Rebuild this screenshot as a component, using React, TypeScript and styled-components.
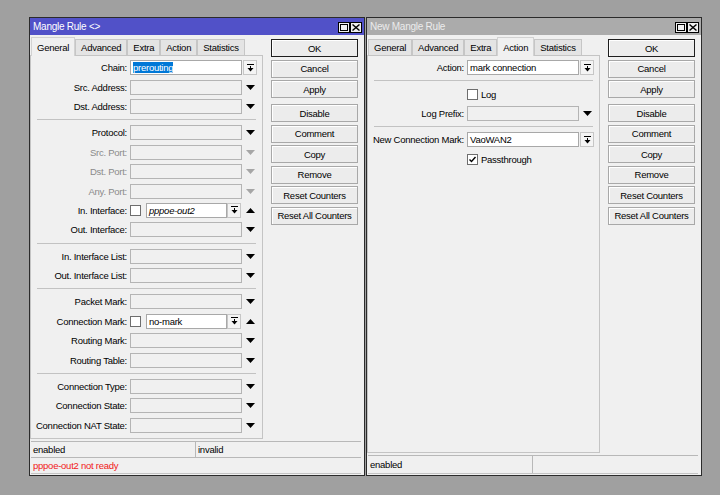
import React from 'react';
import styled, { createGlobalStyle } from 'styled-components';

const GlobalStyle = createGlobalStyle`
  html, body {
    margin: 0;
    padding: 0;
    background: #a0a0a0;
  }
  body {
    font-family: "Liberation Sans", Arial, sans-serif;
    font-size: 9.5px;
    letter-spacing: -0.25px;
    color: #000;
  }
`;

type RowDef =
  | { kind: 'sep' }
  | {
      kind: 'row';
      label: string;
      field: 'combo' | 'drop' | 'check' | 'checkbox';
      value?: string;
      disabled?: boolean;
      italic?: boolean;
      selected?: boolean;
      checked?: boolean;
    };

const leftRows: RowDef[] = [
  { kind: 'row', label: 'Chain:', field: 'drop', value: 'prerouting', selected: true },
  { kind: 'row', label: 'Src. Address:', field: 'combo' },
  { kind: 'row', label: 'Dst. Address:', field: 'combo' },
  { kind: 'sep' },
  { kind: 'row', label: 'Protocol:', field: 'combo' },
  { kind: 'row', label: 'Src. Port:', field: 'combo', disabled: true },
  { kind: 'row', label: 'Dst. Port:', field: 'combo', disabled: true },
  { kind: 'row', label: 'Any. Port:', field: 'combo', disabled: true },
  { kind: 'row', label: 'In. Interface:', field: 'check', value: 'pppoe-out2', italic: true },
  { kind: 'row', label: 'Out. Interface:', field: 'combo' },
  { kind: 'sep' },
  { kind: 'row', label: 'In. Interface List:', field: 'combo' },
  { kind: 'row', label: 'Out. Interface List:', field: 'combo' },
  { kind: 'sep' },
  { kind: 'row', label: 'Packet Mark:', field: 'combo' },
  { kind: 'row', label: 'Connection Mark:', field: 'check', value: 'no-mark' },
  { kind: 'row', label: 'Routing Mark:', field: 'combo' },
  { kind: 'row', label: 'Routing Table:', field: 'combo' },
  { kind: 'sep' },
  { kind: 'row', label: 'Connection Type:', field: 'combo' },
  { kind: 'row', label: 'Connection State:', field: 'combo' },
  { kind: 'row', label: 'Connection NAT State:', field: 'combo' },
];

const rightRows: RowDef[] = [
  { kind: 'row', label: 'Action:', field: 'drop', value: 'mark connection' },
  { kind: 'sep' },
  { kind: 'row', label: '', field: 'checkbox', value: 'Log' },
  { kind: 'row', label: 'Log Prefix:', field: 'combo' },
  { kind: 'sep' },
  { kind: 'row', label: 'New Connection Mark:', field: 'drop', value: 'VaoWAN2' },
  { kind: 'row', label: '', field: 'checkbox', value: 'Passthrough', checked: true },
];

const tabs = ['General', 'Advanced', 'Extra', 'Action', 'Statistics'];
const buttons = ['OK', 'Cancel', 'Apply', 'Disable', 'Comment', 'Copy', 'Remove', 'Reset Counters', 'Reset All Counters'];

function DownArrow({ color = '#000' }: { color?: string }) {
  return (
    <svg width="9" height="5" viewBox="0 0 9 5">
      <polygon points="0,0 9,0 4.5,5" fill={color} />
    </svg>
  );
}

function UpArrow() {
  return (
    <svg width="9" height="5" viewBox="0 0 9 5">
      <polygon points="0,5 9,5 4.5,0" fill="#000" />
    </svg>
  );
}

function BarDownIcon() {
  return (
    <svg width="7" height="8" viewBox="0 0 7 8">
      <rect x="0" y="0" width="7" height="1" fill="#000" />
      <rect x="3" y="2" width="1" height="3" fill="#000" />
      <polygon points="0.5,4 6.5,4 3.5,7.5" fill="#000" />
    </svg>
  );
}

function CheckMark() {
  return (
    <svg width="9" height="9" viewBox="0 0 9 9">
      <polyline points="1.5,4.5 3.5,6.5 7.5,2" fill="none" stroke="#000" strokeWidth="1.4" />
    </svg>
  );
}

function FormRows({ rows }: { rows: RowDef[] }) {
  return (
    <>
      {rows.map((r, i) => {
        if (r.kind === 'sep') return <Separator key={i} />;
        return (
          <Row key={i}>
            <Label $disabled={r.disabled}>{r.label}</Label>
            {r.field === 'combo' && (
              <>
                <Field $w={112} />
                <ArrowCell>
                  <DownArrow color={r.disabled ? '#a6a6a6' : '#000'} />
                </ArrowCell>
              </>
            )}
            {r.field === 'drop' && (
              <>
                <Field $w={112} $white>
                  {r.selected ? <Selection>{r.value}</Selection> : r.value}
                </Field>
                <DropButton $gap={1}>
                  <BarDownIcon />
                </DropButton>
              </>
            )}
            {r.field === 'check' && (
              <>
                <CheckBox />
                <Field $w={81} $white $italic={r.italic} $ml={5}>
                  {r.value}
                </Field>
                <DropButton $gap={0}>
                  <BarDownIcon />
                </DropButton>
                <ArrowCell $w={18}>
                  <UpArrow />
                </ArrowCell>
              </>
            )}
            {r.field === 'checkbox' && (
              <>
                <CheckBox>{r.checked && <CheckMark />}</CheckBox>
                <CheckText>{r.value}</CheckText>
              </>
            )}
          </Row>
        );
      })}
    </>
  );
}

function TitleControls() {
  return (
    <Controls>
      <CtrlBox>
        <MaxSquare />
      </CtrlBox>
      <CtrlBox>
        <svg width="8" height="7" viewBox="0 0 8 7">
          <line x1="0.5" y1="0.5" x2="7.5" y2="6.5" stroke="#000" strokeWidth="1.4" />
          <line x1="7.5" y1="0.5" x2="0.5" y2="6.5" stroke="#000" strokeWidth="1.4" />
        </svg>
      </CtrlBox>
    </Controls>
  );
}

function RuleWindow({
  title,
  active,
  activeTab,
  rows,
  status,
}: {
  title: string;
  active?: boolean;
  activeTab: string;
  rows: RowDef[];
  status: { cells: string[]; message?: string };
}) {
  return (
    <Window>
      <TitleBar $active={active}>
        <TitleText $active={active}>{title}</TitleText>
        <TitleControls />
      </TitleBar>
      <Body>
        <LeftCol>
          <TabStrip>
            {tabs.map((t) => (
              <Tab key={t} $active={t === activeTab}>
                {t}
              </Tab>
            ))}
          </TabStrip>
          <Panel>
            <FormRows rows={rows} />
          </Panel>
        </LeftCol>
        <ButtonCol>
          {buttons.map((b) => (
            <Button key={b} $default={b === 'OK'} $spaced={b === 'Disable'}>
              {b}
            </Button>
          ))}
        </ButtonCol>
      </Body>
      <StatusBar>
        <StatusRow $tall={!status.message}>
          <StatusCell>{status.cells[0]}</StatusCell>
          <StatusCell $last>{status.cells[1]}</StatusCell>
        </StatusRow>
        {status.message && (
          <StatusRow $single>
            <StatusCell $last $error>
              {status.message}
            </StatusCell>
          </StatusRow>
        )}
      </StatusBar>
    </Window>
  );
}

export default function App() {
  return (
    <>
      <GlobalStyle />
      <Desktop>
        <RuleWindow
          title="Mangle Rule <>"
          active
          activeTab="General"
          rows={leftRows}
          status={{ cells: ['enabled', 'invalid'], message: 'pppoe-out2 not ready' }}
        />
        <RuleWindow
          title="New Mangle Rule"
          activeTab="Action"
          rows={rightRows}
          status={{ cells: ['enabled', ''] }}
        />
      </Desktop>
    </>
  );
}

const Desktop = styled.div`
  display: flex;
  gap: 1px;
  padding: 17px 0 0 29px;
  width: 720px;
  height: 495px;
  box-sizing: border-box;
`;

const Window = styled.div`
  width: 336px;
  height: 459px;
  box-sizing: border-box;
  border: 1px solid #2b2b2b;
  background: #f0f0f0;
  display: flex;
  flex-direction: column;
`;

const TitleBar = styled.div<{ $active?: boolean }>`
  height: 17px;
  flex: none;
  display: flex;
  align-items: center;
  justify-content: space-between;
  padding: 0 2px 0 3px;
  background: ${(p) => (p.$active ? '#5151c8' : '#ababab')};
`;

const TitleText = styled.span<{ $active?: boolean }>`
  font-size: 10px;
  color: ${(p) => (p.$active ? '#ffffff' : '#ececec')};
`;

const Controls = styled.div`
  display: flex;
  margin-top: 1px;
`;

const CtrlBox = styled.div`
  width: 12px;
  height: 11px;
  box-sizing: border-box;
  border: 1px solid #000;
  background: #f0f0f0;
  display: flex;
  align-items: center;
  justify-content: center;
`;

const MaxSquare = styled.div`
  width: 8px;
  height: 7px;
  box-sizing: border-box;
  border: 1px solid #000;
`;

const Body = styled.div`
  flex: 1;
  display: flex;
  gap: 8px;
  padding-right: 6px;
  min-height: 0;
`;

const LeftCol = styled.div`
  width: 233px;
  display: flex;
  flex-direction: column;
`;

const TabStrip = styled.div`
  height: 21px;
  margin-bottom: -1px;
  display: flex;
  align-items: flex-end;
  padding-left: 1px;
  position: relative;
  z-index: 1;
`;

const Tab = styled.div<{ $active?: boolean }>`
  height: ${(p) => (p.$active ? '19px' : '16px')};
  margin-bottom: ${(p) => (p.$active ? '0' : '1px')};
  box-sizing: border-box;
  padding: 0 5px;
  display: flex;
  align-items: center;
  border: 1px solid ${(p) => (p.$active ? '#d2d2d2' : '#c6c6c6')};
  border-bottom: none;
  background: ${(p) => (p.$active ? '#f0f0f0' : '#e4e4e4')};
  white-space: nowrap;
`;

const Panel = styled.div`
  flex: 1;
  border: 1px solid #c4c4c4;
  padding-top: 2px;
  display: flex;
  flex-direction: column;
`;

const Row = styled.div`
  height: 19.4px;
  flex: none;
  display: flex;
  align-items: center;
`;

const Label = styled.div<{ $disabled?: boolean }>`
  width: 99px;
  flex: none;
  box-sizing: border-box;
  padding-right: 3px;
  text-align: right;
  white-space: nowrap;
  color: ${(p) => (p.$disabled ? '#8a8a8a' : '#000')};
`;

const Field = styled.div<{ $w: number; $white?: boolean; $italic?: boolean; $ml?: number }>`
  width: ${(p) => p.$w}px;
  margin-left: ${(p) => p.$ml ?? 0}px;
  height: 15px;
  flex: none;
  box-sizing: border-box;
  border: 1px solid ${(p) => (p.$white ? '#a8a8a8' : '#b4b4b4')};
  background: ${(p) => (p.$white ? '#ffffff' : '#f0f0f0')};
  padding: 0 2px;
  line-height: 13px;
  font-style: ${(p) => (p.$italic ? 'italic' : 'normal')};
  white-space: nowrap;
  overflow: hidden;
`;

const Selection = styled.span`
  background: #0078d7;
  color: #fff;
`;

const DropButton = styled.div<{ $gap: number }>`
  width: 14px;
  height: 15px;
  margin-left: ${(p) => p.$gap}px;
  flex: none;
  box-sizing: border-box;
  border: 1px solid #c6c6c6;
  background: #f4f4f4;
  display: flex;
  align-items: center;
  justify-content: center;
`;

const ArrowCell = styled.div<{ $w?: number }>`
  width: ${(p) => p.$w ?? 17}px;
  height: 15px;
  flex: none;
  display: flex;
  align-items: center;
  justify-content: center;
`;

const CheckBox = styled.div`
  width: 11px;
  height: 11px;
  flex: none;
  box-sizing: border-box;
  border: 1px solid #6e6e6e;
  background: #fff;
  display: flex;
  align-items: center;
  justify-content: center;
`;

const CheckText = styled.span`
  margin-left: 3px;
`;

const Separator = styled.div`
  flex: none;
  margin: 3px 6px 3px 6px;
  border-top: 1px solid #c2c2c2;
`;

const ButtonCol = styled.div`
  width: 87px;
  flex: none;
  display: flex;
  flex-direction: column;
  gap: 2.5px;
  padding-top: 4px;
`;

const Button = styled.div<{ $default?: boolean; $spaced?: boolean }>`
  height: 18px;
  flex: none;
  box-sizing: border-box;
  margin-top: ${(p) => (p.$spaced ? '3.5px' : '0')};
  border: 1px solid ${(p) => (p.$default ? '#1e1e1e' : '#a8a8a8')};
  box-shadow: inset 1px 1px 0 #ffffff;
  background: #ececec;
  display: flex;
  align-items: center;
  justify-content: center;
  white-space: nowrap;
`;

const StatusBar = styled.div`
  margin: 2px 3px 1px 1px;
  flex: none;
  border-bottom: 1px solid #c4c4c4;
`;

const StatusRow = styled.div<{ $single?: boolean; $tall?: boolean }>`
  height: ${(p) => (p.$tall ? '18px' : '16px')};
  box-sizing: border-box;
  display: grid;
  grid-template-columns: ${(p) => (p.$single ? '1fr' : '165px 1fr')};
  border-top: 1px solid #b8b8b8;
`;

const StatusCell = styled.div<{ $last?: boolean; $error?: boolean }>`
  padding-left: 2px;
  display: flex;
  align-items: center;
  border-right: ${(p) => (p.$last ? 'none' : '1px solid #b8b8b8')};
  color: ${(p) => (p.$error ? '#f01818' : '#000')};
`;
